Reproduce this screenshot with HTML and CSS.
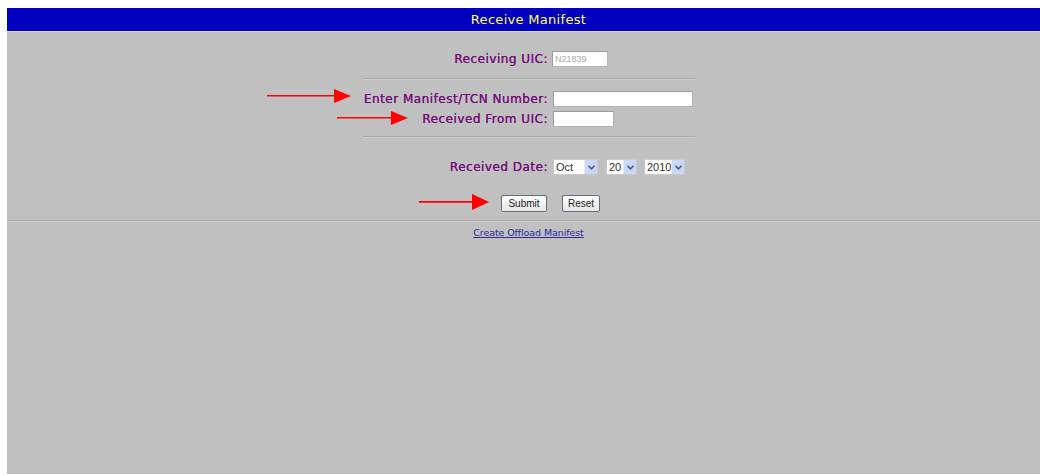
FILE: index.html
```html
<!DOCTYPE html>
<html>
<head>
<meta charset="utf-8">
<title>Receive Manifest</title>
<link rel="stylesheet" href="styles.css">
</head>
<body>
<div class="page">
  <div class="titlebar">Receive Manifest</div>

  <form class="form">
    <div class="row row-uic">
      <label class="label">Receiving UIC:</label>
      <div class="field"><span class="input input-uic">N21839</span></div>
    </div>

    <div class="rule"></div>

    <div class="row row-manifest">
      <label class="label">Enter Manifest/TCN Number:</label>
      <div class="field"><span class="input input-manifest"></span></div>
    </div>
    <div class="row row-from">
      <label class="label">Received From UIC:</label>
      <div class="field"><span class="input input-from"></span></div>
    </div>

    <div class="rule rule-lower"></div>

    <div class="row row-date">
      <label class="label">Received Date:</label>
      <div class="field selects">
        <span class="select sel-month"><span class="sel-text">Oct</span><span class="sel-btn"><svg width="7" height="5" viewBox="0 0 7 5"><path d="M0.5 0.8 L3.5 3.8 L6.5 0.8" fill="none" stroke="#4a5f8a" stroke-width="1.6"/></svg></span></span>
        <span class="select sel-day"><span class="sel-text">20</span><span class="sel-btn"><svg width="7" height="5" viewBox="0 0 7 5"><path d="M0.5 0.8 L3.5 3.8 L6.5 0.8" fill="none" stroke="#4a5f8a" stroke-width="1.6"/></svg></span></span>
        <span class="select sel-year"><span class="sel-text">2010</span><span class="sel-btn"><svg width="7" height="5" viewBox="0 0 7 5"><path d="M0.5 0.8 L3.5 3.8 L6.5 0.8" fill="none" stroke="#4a5f8a" stroke-width="1.6"/></svg></span></span>
      </div>
    </div>

    <div class="row row-buttons">
      <div class="label"><span class="button btn-submit">Submit</span></div>
      <div class="field"><span class="button btn-reset">Reset</span></div>
    </div>
  </form>

  <div class="rule rule-full"></div>

  <div class="links"><a class="link" href="#">Create Offload Manifest</a></div>

  <!-- red pointer arrows drawn over the form -->
  <svg class="arrow arrow-1" width="84" height="16" viewBox="0 0 84 16"><path d="M0 7 H68 V8.6 H0 Z" fill="#f00"/><path d="M67 1 L84 8 L67 15 Z" fill="#f00"/></svg>
  <svg class="arrow arrow-2" width="71" height="16" viewBox="0 0 71 16"><path d="M0 7 H55 V8.6 H0 Z" fill="#f00"/><path d="M54 1 L71 8 L54 15 Z" fill="#f00"/></svg>
  <svg class="arrow arrow-3" width="70" height="18" viewBox="0 0 70 18"><path d="M0 8 H54 V9.7 H0 Z" fill="#f00"/><path d="M53 1 L70 9 L53 17 Z" fill="#f00"/></svg>
</div>
</body>
</html>
```

FILE: styles.css
```css
html, body {
  margin: 0;
  padding: 0;
  background: #ffffff;
  overflow: hidden;
}

.page {
  position: relative;
  margin: 8px 0 0 7px;
  width: 1043px;
  height: 466px;
  background: #c0c0c0;
  font-family: "DejaVu Sans", Verdana, sans-serif;
}

.titlebar {
  height: 23px;
  line-height: 23px;
  background: #0000be;
  color: #ffff70;
  text-align: center;
  font-size: 13px;
  letter-spacing: 0.3px;
  border-bottom: 1px solid #d8d8d8;
}

.form {
  width: 333px;
  margin: 0 auto;
  padding-top: 19px;
}

.row {
  display: flex;
  align-items: center;
}

.label {
  width: 186px;
  padding-right: 4px;
  text-align: right;
  color: #760c7a;
  font-size: 12px;
  letter-spacing: 0.5px;
  line-height: 16px;
  text-shadow: 0.1px 0 0 #760c7a;
}

.field {
  flex: 1;
  display: flex;
  align-items: center;
  padding-left: 1px;
}

.input {
  display: block;
  box-sizing: border-box;
  height: 16px;
  background: #ffffff;
  border: 1px solid #b4b4b4;
  border-top-color: #9c9c9c;
  border-left-color: #9c9c9c;
  font-family: "Liberation Sans", Arial, sans-serif;
  font-size: 9px;
  line-height: 14px;
  color: #a8a8a8;
  padding-left: 2px;
}

.input-uic { width: 56px; margin-left: -1px; }
.input-manifest { width: 140px; }
.input-from { width: 61px; }

.row-manifest { margin-top: 11px; }
.row-from { margin-top: 4px; }

.rule {
  height: 1px;
  background: #a9a9a9;
  border-bottom: 1px solid #cfcfcf;
  margin-top: 11px;
}

.rule-lower { margin-top: 9px; }

.row-date { margin-top: 21px; }

.select {
  display: flex;
  box-sizing: border-box;
  height: 16px;
  background: #ffffff;
  border: 1px solid #c8c8c8;
  font-family: "Liberation Sans", Arial, sans-serif;
  font-size: 11px;
  color: #333333;
}

.sel-text {
  flex: 1;
  line-height: 14px;
  padding-left: 2px;
}

.sel-btn {
  width: 12px;
  background: #c9d8f6;
  border-left: 1px solid #e6eefc;
  display: flex;
  align-items: center;
  justify-content: center;
}

.sel-month { width: 45px; }
.sel-day { width: 31px; margin-left: 8px; }
.sel-year { width: 41px; margin-left: 7px; }

.row-buttons { margin-top: 20px; }

.row-buttons .label {
  display: flex;
  justify-content: flex-end;
  padding-right: 5px;
  width: 185px;
  text-shadow: none;
}

.row-buttons .field { padding-left: 10px; }

.button {
  display: block;
  box-sizing: border-box;
  height: 17px;
  line-height: 15px;
  border: 1px solid #5f6f7e;
  border-radius: 2px;
  background: linear-gradient(#fdfdfd, #e6e6e6);
  color: #222222;
  font-family: "Liberation Sans", Arial, sans-serif;
  font-size: 10px;
  letter-spacing: 0;
  text-align: center;
}

.btn-submit { width: 46px; }
.btn-reset { width: 38px; }

.rule-full { margin-top: 8px; }

.links {
  text-align: center;
  margin-top: 3px;
  line-height: 11px;
}

.link {
  color: #2a2a9a;
  font-size: 9.5px;
  letter-spacing: -0.1px;
  text-decoration: underline;
}

.arrow {
  position: absolute;
  display: block;
}

.arrow-1 { left: 260px; top: 80px; }
.arrow-2 { left: 330px; top: 102px; }
.arrow-3 { left: 412px; top: 185px; }
```
